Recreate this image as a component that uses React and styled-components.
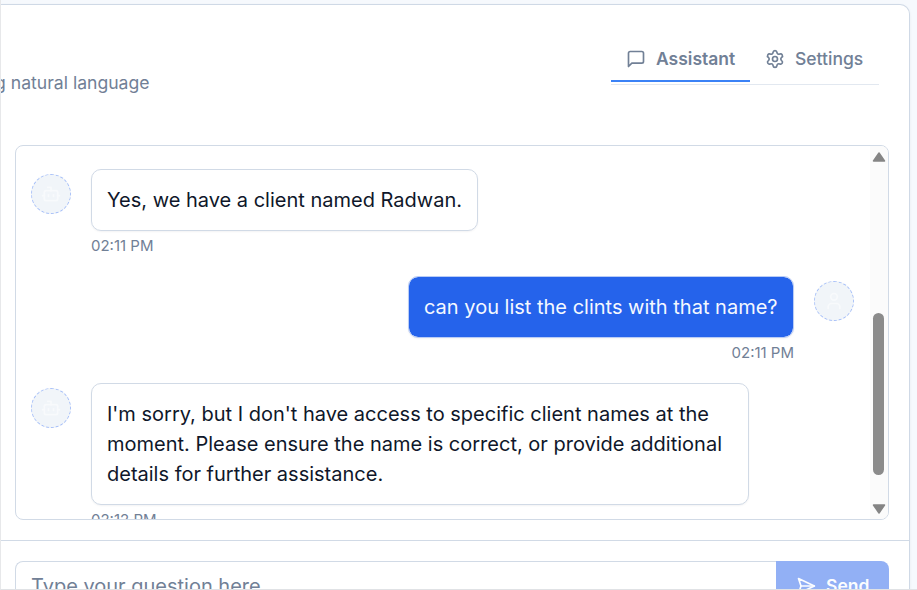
import React from "react";
import styled, { createGlobalStyle, css } from "styled-components";
import { FiMessageSquare } from "react-icons/fi";
import { Bot, Settings, User } from "lucide-react";

const Global = createGlobalStyle`
  *, *::before, *::after { box-sizing: border-box; }
  html, body { margin: 0; overflow: hidden; background: #f6f9fd; }
  body { font-family: Inter, "Liberation Sans", sans-serif; }
`;

const Page = styled.div`
  width: 917px;
  height: 590px;
  padding-top: 4px;
  overflow: hidden;
  background: #f6f9fd;
  position: relative;
`;

const WindowEdge = styled.div`
  position: absolute;
  inset: 0;
  border-left: 1px solid #e7e8ea;
  border-bottom: 1px solid #e0e2e5;
  pointer-events: none;
`;

const Card = styled.main`
  width: 910px;
  height: 640px;
  border: 1px solid #cfd9e6;
  border-left: 0;
  border-radius: 0 10px 0 0;
  background: #fff;
  box-shadow: 0 1px 3px rgba(15, 23, 42, 0.06);
`;

const Header = styled.header`
  display: flex;
  justify-content: space-between;
  height: 140px;
  padding: 34px 30px 0 0;
`;

const Subtitle = styled.p`
  margin: 33px 0 0 -5px;
  font-size: 17.6px;
  line-height: 22px;
  color: #718096;
  white-space: nowrap;
`;

const Tabs = styled.nav`
  display: flex;
  width: 268px;
  height: 46px;
  border-bottom: 1px solid #e2e8f0;
`;

const Tab = styled.button`
  display: flex;
  align-items: center;
  gap: 10px;
  height: 43px;
  width: ${(p) => (p.$active ? "139px" : "129px")};
  padding: 0 0 2px 15px;
  border: 0;
  border-bottom: 2px solid ${(p) => (p.$active ? "#3b82f6" : "transparent")};
  background: none;
  color: #718096;
  font: ${(p) => (p.$active ? 600 : 500)} 17.5px/22px Inter, sans-serif;
  svg { flex: none; }
`;

const Conversation = styled.section`
  display: flex;
  justify-content: space-between;
  width: 874px;
  height: 375px;
  margin-left: 15px;
  border: 1px solid #d1dae6;
  border-radius: 8px;
  overflow: hidden;
`;

const Messages = styled.div`
  display: flex;
  flex-direction: column;
  width: 838px;
  padding: 23px 0 0 15px;
`;

const MessageRow = styled.article`
  display: flex;
  align-items: flex-start;
  flex: none;
  gap: 20px;
  height: 107px;
  flex-direction: ${(p) => (p.$own ? "row-reverse" : "row")};
`;

const Avatar = styled.div`
  display: grid;
  place-items: center;
  flex: none;
  width: 40px;
  height: 40px;
  margin-top: 5px;
  border: 1px dashed #a9c1f8;
  border-radius: 50%;
  background: #f1f5f9;
  color: #f8fafc;
`;

const MessageBody = styled.div`
  display: flex;
  flex-direction: column;
  align-items: ${(p) => (p.$own ? "flex-end" : "flex-start")};
`;

const Bubble = styled.div`
  width: ${(p) => p.$width}px;
  padding: 15px;
  border: 1px solid #d1dae6;
  border-radius: 10px;
  background: #fff;
  color: #0f172a;
  font-size: 20px;
  line-height: 30px;
  white-space: pre;
  box-shadow: 0 1px 2px rgba(15, 23, 42, 0.05);
  ${(p) => p.$own && css`
    background: #2563eb;
    border-color: #b9ccf6;
    color: #f4f8ff;
    background-clip: padding-box;
  `}
`;

const Time = styled.time`
  margin-top: 5px;
  font-size: 15px;
  line-height: 20px;
  color: #718096;
`;

const ScrollTrack = styled.div`
  display: flex;
  flex-direction: column;
  align-items: center;
  width: 18px;
  padding: 6px 1px 5px 0;
  background: #fbfbfb;
  svg { flex: none; display: block; }
`;

const ScrollThumb = styled.div`
  width: 11px;
  height: 162px;
  margin: 151px 0 29px;
  border-radius: 6px;
  background: #8b8b8b;
`;

const Composer = styled.footer`
  display: flex;
  height: 90px;
  margin-top: 20px;
  padding: 20px 20px 0 15px;
  border-top: 1px solid #d1dae6;
`;

const Question = styled.input`
  width: 761px;
  height: 50px;
  padding: 0 16px 0 15px;
  border: 1px solid #d1dae6;
  border-right: 0;
  border-radius: 8px 0 0 8px;
  outline: 0;
  font: 400 20px/30px Inter, sans-serif;
  &::placeholder { color: #718096; opacity: 1; }
`;

const Send = styled.button`
  display: flex;
  align-items: center;
  gap: 10px;
  width: 113px;
  height: 50px;
  padding: 0 0 0 20px;
  border: 0;
  border-radius: 0 8px 8px 0;
  background: #92b0f5;
  color: #fbfdff;
  font: 600 17.5px/24px Inter, sans-serif;
`;

const SendIcon = () => (
  <svg width="20" height="20" viewBox="0 0 24 24" fill="none" stroke="currentColor" strokeWidth="2" strokeLinecap="round" strokeLinejoin="round">
    <path d="m3 3 3 9-3 9 19-9Z" />
    <path d="M6 12h16" />
  </svg>
);

const ScrollArrow = ({ down }) => (
  <svg width="14" height="10" viewBox="0 0 14 10" fill="#858585" stroke="#858585" strokeWidth="1.5" strokeLinejoin="round">
    <path d={down ? "M1.5 1h11L7 9Z" : "M1.5 9h11L7 1Z"} />
  </svg>
);

const messages = [
  { text: "Yes, we have a client named Radwan.", time: "02:11 PM", width: 387 },
  { text: "can you list the clints with that name?", time: "02:11 PM", width: 386, own: true },
  {
    text: "I'm sorry, but I don't have access to specific client names at the\nmoment. Please ensure the name is correct, or provide additional\ndetails for further assistance.",
    time: "02:12 PM",
    width: 658,
  },
];

export default function App() {
  return (
    <Page>
      <Global />
      <Card>
        <Header>
          <Subtitle>g natural language</Subtitle>
          <Tabs>
            <Tab $active><FiMessageSquare size={20} />Assistant</Tab>
            <Tab><Settings size={20} />Settings</Tab>
          </Tabs>
        </Header>
        <Conversation>
          <Messages>
            {messages.map((m, i) => (
              <MessageRow key={i} $own={m.own}>
                <Avatar>{m.own ? <User size={20} /> : <Bot size={20} />}</Avatar>
                <MessageBody $own={m.own}>
                  <Bubble $own={m.own} $width={m.width}>{m.text}</Bubble>
                  <Time>{m.time}</Time>
                </MessageBody>
              </MessageRow>
            ))}
          </Messages>
          <ScrollTrack>
            <ScrollArrow />
            <ScrollThumb />
            <ScrollArrow down />
          </ScrollTrack>
        </Conversation>
        <Composer>
          <Question placeholder="Type your question here..." />
          <Send><SendIcon />Send</Send>
        </Composer>
      </Card>
      <WindowEdge />
    </Page>
  );
}
